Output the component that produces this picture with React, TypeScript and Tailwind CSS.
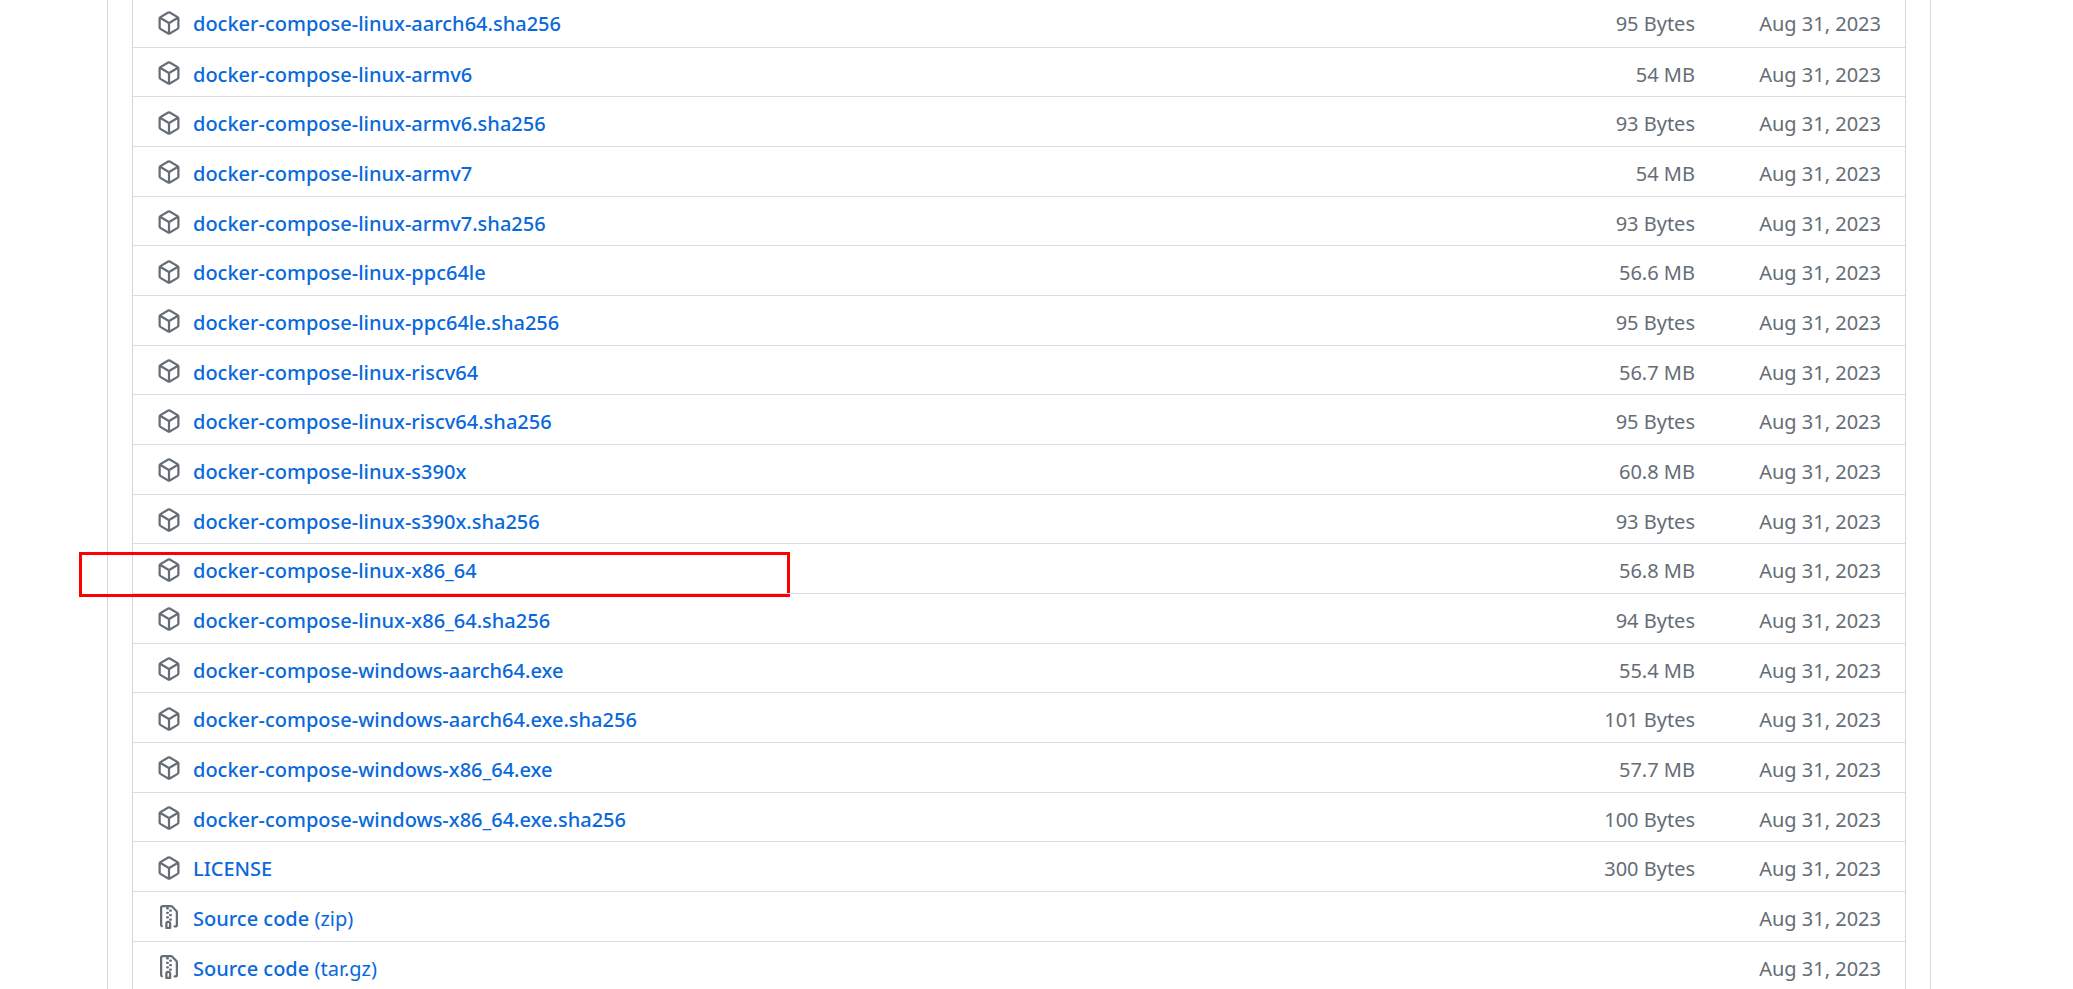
const assets = [
  { name: 'docker-compose-linux-aarch64.sha256', size: '95 Bytes' },
  { name: 'docker-compose-linux-armv6', size: '54 MB' },
  { name: 'docker-compose-linux-armv6.sha256', size: '93 Bytes' },
  { name: 'docker-compose-linux-armv7', size: '54 MB' },
  { name: 'docker-compose-linux-armv7.sha256', size: '93 Bytes' },
  { name: 'docker-compose-linux-ppc64le', size: '56.6 MB' },
  { name: 'docker-compose-linux-ppc64le.sha256', size: '95 Bytes' },
  { name: 'docker-compose-linux-riscv64', size: '56.7 MB' },
  { name: 'docker-compose-linux-riscv64.sha256', size: '95 Bytes' },
  { name: 'docker-compose-linux-s390x', size: '60.8 MB' },
  { name: 'docker-compose-linux-s390x.sha256', size: '93 Bytes' },
  { name: 'docker-compose-linux-x86_64', size: '56.8 MB', marked: true },
  { name: 'docker-compose-linux-x86_64.sha256', size: '94 Bytes' },
  { name: 'docker-compose-windows-aarch64.exe', size: '55.4 MB' },
  { name: 'docker-compose-windows-aarch64.exe.sha256', size: '101 Bytes' },
  { name: 'docker-compose-windows-x86_64.exe', size: '57.7 MB' },
  { name: 'docker-compose-windows-x86_64.exe.sha256', size: '100 Bytes' },
  { name: 'LICENSE', size: '300 Bytes' },
];

function PackageIcon() {
  return (
    <svg viewBox="0 0 16 16" className="w-6 h-6 shrink-0 fill-[#656d76]">
      <path d="m8.878.392 5.25 3.045c.54.314.872.89.872 1.514v6.098a1.75 1.75 0 0 1-.872 1.514l-5.25 3.045a1.75 1.75 0 0 1-1.756 0l-5.25-3.045A1.75 1.75 0 0 1 1 11.049V4.951c0-.624.332-1.201.872-1.514L7.122.392a1.75 1.75 0 0 1 1.756 0ZM7.875 1.69l-4.63 2.685L8 7.133l4.755-2.758-4.63-2.685a.248.248 0 0 0-.25 0ZM2.5 5.677v5.372c0 .09.047.171.125.216l4.625 2.683V8.432Zm6.25 8.271 4.625-2.683a.25.25 0 0 0 .125-.216V5.677L8.75 8.432Z" />
    </svg>
  );
}

function ZipIcon() {
  return (
    <svg viewBox="0 0 16 16" className="w-6 h-6 shrink-0 fill-[#656d76]">
      <path d="M3.5 1.75v11.5c0 .09.048.173.126.217a.75.75 0 0 1-.752 1.298A1.748 1.748 0 0 1 2 13.25V1.75C2 .784 2.784 0 3.75 0h5.586c.464 0 .909.185 1.237.513l2.914 2.914c.329.328.513.773.513 1.237v8.586A1.75 1.75 0 0 1 12.25 15h-.5a.75.75 0 0 1 0-1.5h.5a.25.25 0 0 0 .25-.25V4.664a.25.25 0 0 0-.073-.177L9.513 1.573a.25.25 0 0 0-.177-.073H7.25a.75.75 0 0 1 0 1.5h-.5a.75.75 0 0 1 0-1.5h-3a.25.25 0 0 0-.25.25Zm3.75 8.75h.5c.966 0 1.75.784 1.75 1.75v3a.75.75 0 0 1-.75.75h-2.5a.75.75 0 0 1-.75-.75v-3c0-.966.784-1.75 1.75-1.75ZM6 5.25a.75.75 0 0 1 .75-.75h.5a.75.75 0 0 1 0 1.5h-.5A.75.75 0 0 1 6 5.25Zm.75 2.25h.5a.75.75 0 0 1 0 1.5h-.5a.75.75 0 0 1 0-1.5ZM8 6.75A.75.75 0 0 1 8.75 6h.5a.75.75 0 0 1 0 1.5h-.5A.75.75 0 0 1 8 6.75ZM8.75 3h.5a.75.75 0 0 1 0 1.5h-.5a.75.75 0 0 1 0-1.5ZM8 9.75A.75.75 0 0 1 8.75 9h.5a.75.75 0 0 1 0 1.5h-.5A.75.75 0 0 1 8 9.75Zm-1 2.5v2.25h1v-2.25a.25.25 0 0 0-.25-.25h-.5a.25.25 0 0 0-.25.25Z" />
    </svg>
  );
}

function Row({ icon, size, children, marked }: { icon: React.ReactNode; size?: string; children: React.ReactNode; marked?: boolean }) {
  return (
    <div className="relative flex items-center h-[49.68px] pt-[2px] pl-[24px] pr-[24px] border-t border-[#d8dee4] first:border-t-0">
      {icon}
      <div className="ml-[12px] flex-1 pt-[3px] text-[#0969da] font-medium">{children}</div>
      {size && <div className="pt-[3px] text-[#656d76]">{size}</div>}
      <div className="w-[186px] pt-[3px] text-right text-[#656d76]">Aug 31, 2023</div>
      {marked && (
        <div className="absolute left-[-54px] top-[8px] w-[711px] h-[45px] border-[3px] border-[#ff0000]" />
      )}
    </div>
  );
}

export default function App() {
  return (
    <div className="h-[989px] overflow-hidden bg-white font-['Noto_Sans',sans-serif] text-[20px]">
      <div className="flex flex-col ml-[107px] w-[1824px] h-[989px] border-x border-[#d0d7de] px-[24px]">
        <div className="border-x border-[#d0d7de] -mt-[3px]">
          {assets.map((a) => (
            <Row key={a.name} icon={<PackageIcon />} size={a.size} marked={a.marked}>
              {a.name}
            </Row>
          ))}
          <Row icon={<ZipIcon />}>
            Source code <span className="font-normal">(zip)</span>
          </Row>
          <Row icon={<ZipIcon />}>
            Source code <span className="font-normal">(tar.gz)</span>
          </Row>
        </div>
      </div>
    </div>
  );
}
